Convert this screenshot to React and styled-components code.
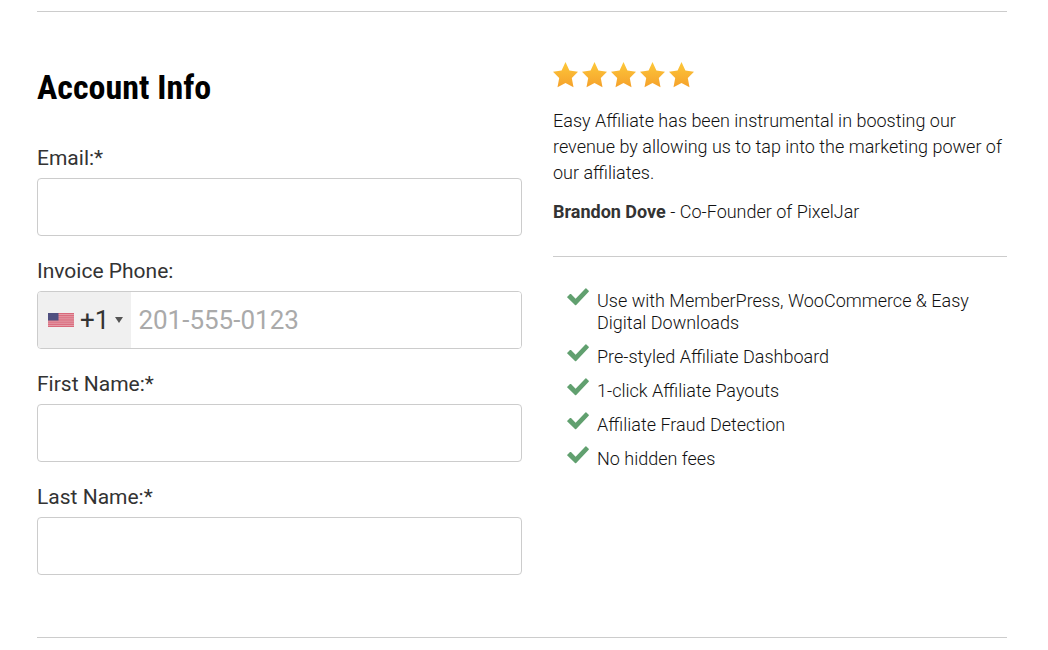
import React, { useState } from "react";
import styled, { createGlobalStyle } from "styled-components";

const GlobalStyle = createGlobalStyle`
  * {
    box-sizing: border-box;
  }
  body {
    margin: 0;
    background: #fff;
    color: #333;
    font-family: Roboto, "Liberation Sans", sans-serif;
  }
`;

const Page = styled.main`
  padding: 11px 41px 12px 37px;
`;

const Section = styled.section`
  display: grid;
  grid-template-columns: 485fr 454fr;
  column-gap: 31px;
  padding: 50px 0 62px;
  border-top: 1px solid #ccc;
  border-bottom: 1px solid #ccc;
`;

const Title = styled.h2`
  margin: 0 0 34px;
  font-family: "Roboto Condensed", "Liberation Sans Narrow", Roboto, sans-serif;
  font-size: 34px;
  font-weight: 700;
  line-height: 50px;
  color: #000;
`;

const Form = styled.form`
  display: flex;
  flex-direction: column;
  gap: 23px;
`;

const Field = styled.div`
  display: flex;
  flex-direction: column;
  gap: 8px;
`;

const Label = styled.label`
  font-size: 21px;
  line-height: 24px;
`;

const Input = styled.input`
  width: 100%;
  height: 58px;
  padding: 0 12px;
  border: 1px solid #ccc;
  border-radius: 4px;
  background: #fff;
  color: #333;
  font-family: inherit;
  font-size: 26px;
`;

const PhoneBox = styled.div`
  display: flex;
  height: 58px;
  border: 1px solid #ccc;
  border-radius: 4px;
  overflow: hidden;
`;

const CountryButton = styled.button`
  display: flex;
  align-items: center;
  gap: 6px;
  padding: 0 8px 0 10px;
  border: 0;
  background: #f0f0f0;
  color: #333;
  font-family: inherit;
  font-size: 26px;
`;

const Arrow = styled.span`
  border-top: 6px solid #555;
  border-left: 4px solid transparent;
  border-right: 4px solid transparent;
`;

const PhoneInput = styled.input`
  flex: 1;
  min-width: 0;
  padding: 0 7px;
  border: 0;
  color: #333;
  font-family: inherit;
  font-size: 26px;

  &::placeholder {
    color: #aaa;
  }
`;

const Stars = styled.div`
  display: flex;
  gap: 4px;
`;

const Quote = styled.p`
  margin: 20px 0 13px;
  color: #111;
  font-size: 18px;
  font-weight: 300;
  line-height: 26px;
`;

const Author = styled.p`
  margin: 0;
  padding-bottom: 31px;
  border-bottom: 1px solid #ccc;
  color: #111;
  font-size: 18px;
  font-weight: 300;
  line-height: 26px;

  strong {
    color: #333;
    font-weight: 700;
  }
`;

const FeatureList = styled.ul`
  display: flex;
  flex-direction: column;
  gap: 10px;
  margin: 31px 0 0;
  padding: 0 14px;
  list-style: none;
`;

const Feature = styled.li`
  display: flex;
  align-items: flex-start;
  gap: 8px;
  color: #111;
  font-size: 18px;
  font-weight: 300;
  line-height: 22px;

  svg {
    flex: none;
  }

  span {
    padding-top: 2px;
  }
`;

const features = [
  "Use with MemberPress, WooCommerce & Easy Digital Downloads",
  "Pre-styled Affiliate Dashboard",
  "1-click Affiliate Payouts",
  "Affiliate Fraud Detection",
  "No hidden fees",
];

const Star = () => (
  <svg width="25" height="26" viewBox="0 0 25 26" aria-hidden="true">
    <path
      d="M12.5 0 16.4 8.4 25 9.7 18.8 16 20.5 25.2 12.5 21.1 4.5 25.2 6.2 16 0 9.7 8.6 8.4Z"
      fill="url(#starFill)"
    />
  </svg>
);

const Check = () => (
  <svg width="22" height="20" viewBox="0 0 22 20" aria-hidden="true">
    <path
      d="M0.3 8.8 3 6.1Q3.5 5.7 4 6.1L8.6 10.7 18.4 0.5Q18.9 0.1 19.4 0.5L21.7 2.8Q22.1 3.3 21.7 3.8L9.2 17Q8.6 17.5 8 17L0.3 9.6Q0 9.2 0.3 8.8Z"
      fill="#61a06f"
    />
  </svg>
);

const Flag = () => (
  <svg width="26" height="14" viewBox="0 0 26 14" aria-hidden="true">
    <path d="M0 0H26V14H0Z" fill="#d9697b" />
    <path
      d="M0 1.6H26M0 3.8H26M0 5.9H26M0 8.1H26M0 10.2H26M0 12.4H26"
      stroke="#e5a3ad"
      strokeWidth="1"
    />
    <path d="M0 0H10.5V7.5H0Z" fill="#505080" />
  </svg>
);

const TextField = ({ id, label, type = "text" }) => (
  <Field>
    <Label htmlFor={id}>{label}</Label>
    <Input id={id} name={id} type={type} />
  </Field>
);

const App = () => {
  const [phone, setPhone] = useState("");

  return (
    <Page>
      <GlobalStyle />
      <svg width="0" height="0" display="block" aria-hidden="true">
        <linearGradient id="starFill" x1="0" y1="0" x2="0" y2="1">
          <stop offset="0" stopColor="#fdc83a" />
          <stop offset="1" stopColor="#f5a12b" />
        </linearGradient>
      </svg>
      <Section>
        <div>
          <Title>Account Info</Title>
          <Form>
            <TextField id="email" label="Email:*" type="email" />
            <Field>
              <Label htmlFor="phone">Invoice Phone:</Label>
              <PhoneBox>
                <CountryButton type="button">
                  <Flag />
                  +1
                  <Arrow />
                </CountryButton>
                <PhoneInput
                  id="phone"
                  type="tel"
                  placeholder="201-555-0123"
                  value={phone}
                  onChange={(e) => setPhone(e.target.value)}
                />
              </PhoneBox>
            </Field>
            <TextField id="firstName" label="First Name:*" />
            <TextField id="lastName" label="Last Name:*" />
          </Form>
        </div>
        <div>
          <Stars role="img" aria-label="5 stars">
            {[1, 2, 3, 4, 5].map((n) => (
              <Star key={n} />
            ))}
          </Stars>
          <Quote>
            Easy Affiliate has been instrumental in boosting our revenue by
            allowing us to tap into the marketing power of our affiliates.
          </Quote>
          <Author>
            <strong>Brandon Dove</strong> - Co-Founder of PixelJar
          </Author>
          <FeatureList>
            {features.map((text) => (
              <Feature key={text}>
                <Check />
                <span>{text}</span>
              </Feature>
            ))}
          </FeatureList>
        </div>
      </Section>
    </Page>
  );
};

export default App;
